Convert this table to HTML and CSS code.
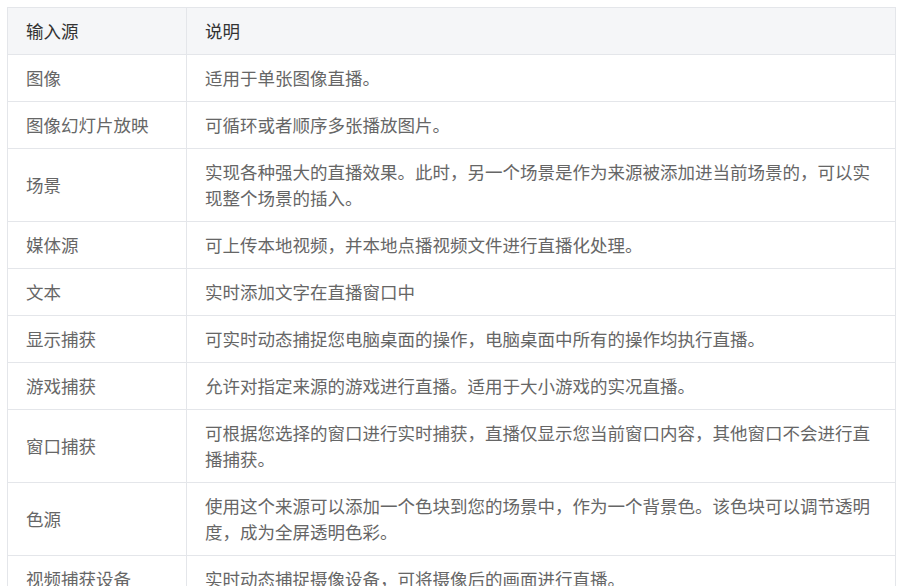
FILE: index.html
```html
<!DOCTYPE html>
<html lang="zh-CN">
<head>
    <meta charset="UTF-8">
    <meta name="viewport" content="width=device-width, initial-scale=1.0">
    <title>输入源说明</title>
    <link rel="stylesheet" href="styles.css">
</head>
<body>
    <table class="sources">
        <thead>
            <tr>
                <th class="name">输入源</th>
                <th>说明</th>
            </tr>
        </thead>
        <tbody>
            <tr><td>图像</td><td>适用于单张图像直播。</td></tr>
            <tr><td>图像幻灯片放映</td><td>可循环或者顺序多张播放图片。</td></tr>
            <tr><td>场景</td><td>实现各种强大的直播效果。此时，另一个场景是作为来源被添加进当前场景的，可以实现整个场景的插入。</td></tr>
            <tr><td>媒体源</td><td>可上传本地视频，并本地点播视频文件进行直播化处理。</td></tr>
            <tr><td>文本</td><td>实时添加文字在直播窗口中</td></tr>
            <tr><td>显示捕获</td><td>可实时动态捕捉您电脑桌面的操作，电脑桌面中所有的操作均执行直播。</td></tr>
            <tr><td>游戏捕获</td><td>允许对指定来源的游戏进行直播。适用于大小游戏的实况直播。</td></tr>
            <tr><td>窗口捕获</td><td>可根据您选择的窗口进行实时捕获，直播仅显示您当前窗口内容，其他窗口不会进行直播捕获。</td></tr>
            <tr><td>色源</td><td>使用这个来源可以添加一个色块到您的场景中，作为一个背景色。该色块可以调节透明度，成为全屏透明色彩。</td></tr>
            <tr><td>视频捕获设备</td><td>实时动态捕捉摄像设备，可将摄像后的画面进行直播。</td></tr>
        </tbody>
    </table>
</body>
</html>
```

FILE: styles.css
```css
body {
    margin: 7px;
    background: #fff;
    font-family: "Noto Sans CJK SC", "Microsoft YaHei", sans-serif;
    overflow: hidden;
}
.sources {
    width: 889px;
    table-layout: fixed;
    border-collapse: collapse;
    font-size: 17.5px;
    line-height: 26px;
    color: #666;
    text-align: left;
}
.sources th,
.sources td {
    height: 26px;
    border: 1px solid #e4e6ea;
    padding: 10px 15px 10px 18px;
    vertical-align: middle;
}
.sources th {
    background: #f5f6f8;
    color: #333;
    font-weight: normal;
}
.sources .name {
    width: 145px;
}
```
